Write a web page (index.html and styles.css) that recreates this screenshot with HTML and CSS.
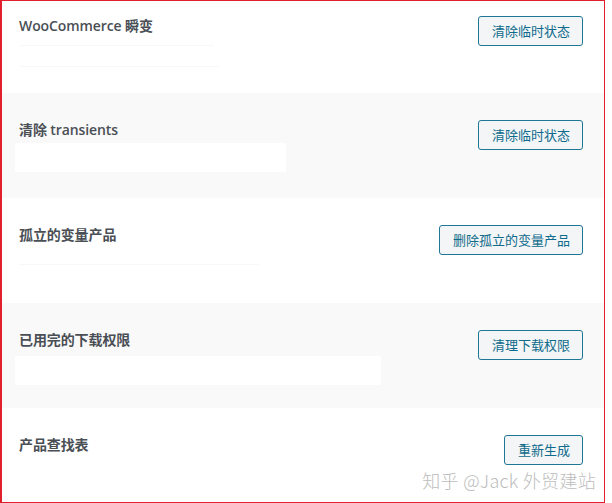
FILE: index.html
```html
<!DOCTYPE html>
<html lang="zh">
<head>
<meta charset="utf-8">
<link rel="stylesheet" href="styles.css">
</head>
<body>
<div class="frame">
  <div class="list">
    <div class="row row-first">
      <div class="info">
        <div class="title">WooCommerce 瞬变</div>
        <div class="desc desc-lines"><span class="ln ln1"></span><span class="ln ln2"></span></div>
      </div>
      <button class="btn">清除临时状态</button>
    </div>
    <div class="row row-alt">
      <div class="info">
        <div class="title">清除 transients</div>
        <div class="desc box box-w270"></div>
      </div>
      <button class="btn">清除临时状态</button>
    </div>
    <div class="row">
      <div class="info">
        <div class="title">孤立的变量产品</div>
        <div class="desc desc-lines"><span class="ln ln3"></span></div>
      </div>
      <button class="btn">删除孤立的变量产品</button>
    </div>
    <div class="row row-alt">
      <div class="info">
        <div class="title">已用完的下载权限</div>
        <div class="desc box box-w365"></div>
      </div>
      <button class="btn">清理下载权限</button>
    </div>
    <div class="row row-last">
      <div class="info">
        <div class="title">产品查找表</div>
      </div>
      <button class="btn">重新生成</button>
    </div>
  </div>
  <div class="watermark">知乎 @Jack 外贸建站</div>
</div>
</body>
</html>
```

FILE: styles.css
```css
html, body {
  margin: 0;
  padding: 0;
  background: #ffffff;
}
.frame {
  position: relative;
  box-sizing: border-box;
  width: 605px;
  height: 503px;
  border-top: 1px solid #e0202a;
  border-left: 2px solid #e0202a;
  border-right: 1px solid #e0202a;
  border-bottom: 1px solid #e0202a;
  overflow: hidden;
  font-family: "Open Sans", "Noto Sans CJK SC", sans-serif;
}
.list {
  display: flex;
  flex-direction: column;
}
.row {
  display: flex;
  justify-content: space-between;
  align-items: flex-start;
  height: 105px;
  box-sizing: border-box;
  padding: 27px 21px 0 17px;
  background: #ffffff;
}
.row-alt {
  background: #f9f9f9;
}
.row-first {
  height: 92px;
  padding-top: 15px;
}
.row-last {
  height: 95px;
}
.title {
  font-size: 14px;
  font-weight: 600;
  line-height: 20px;
  color: #4a4f55;
  letter-spacing: -0.1px;
}
.desc {
  margin-top: 3px;
}
.desc-lines {
  display: flex;
  flex-direction: column;
  gap: 20px;
  padding-top: 6px;
}
.ln {
  display: block;
  height: 1px;
  background: #f8f8f8;
}
.ln1 { width: 195px; }
.ln2 { width: 200px; }
.ln3 { width: 240px; margin-top: 10px; }
.box {
  background: #ffffff;
  height: 29px;
  margin-left: -4px;
}
.box-w270 { width: 271px; }
.box-w365 { width: 366px; margin-top: 6px; }
.btn {
  box-sizing: border-box;
  height: 30px;
  margin-top: 0;
  padding: 0 12px 0 13px;
  font-family: "Open Sans", "Noto Sans CJK SC", sans-serif;
  font-size: 13px;
  line-height: 28px;
  color: #0e6b8c;
  background: #f3f5f6;
  border: 1px solid #1f7796;
  border-radius: 3px;
  white-space: nowrap;
}
.watermark {
  position: absolute;
  right: 8px;
  bottom: 10px;
  font-family: "Noto Sans CJK SC", sans-serif;
  font-size: 18px;
  font-weight: 300;
  line-height: 24px;
  color: #bdbdbd;
  letter-spacing: 0.3px;
  text-shadow: 0 0 2px #ffffff, 0 0 2px #ffffff;
}
```
